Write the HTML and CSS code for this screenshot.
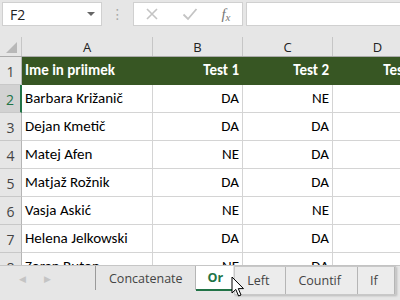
FILE: index.html
```html
<!DOCTYPE html>
<html lang="sl">
<head>
    <meta charset="UTF-8">
    <title>Or</title>
    <link rel="stylesheet" href="styles.css">
</head>
<body>

<div class="toolbar">
    <div class="namebox">
        <span>F2</span>
        <span class="caret"></span>
    </div>
    <div class="dots">⋮</div>
    <div class="fbtns">
        <svg width="14" height="14" viewBox="0 0 14 14"><path d="M2 2 L12 12 M12 2 L2 12" stroke="#c4c4c4" stroke-width="1.6" fill="none"/></svg>
        <svg width="16" height="14" viewBox="0 0 16 14"><path d="M1.5 7.5 L6 12 L14.5 2" stroke="#c4c4c4" stroke-width="1.8" fill="none"/></svg>
        <span class="fx">f<span class="x">x</span></span>
    </div>
    <div class="finput"></div>
</div>

<div class="sheet">
    <div class="colhead">
        <div class="corner"><span class="tri"></span></div>
        <div class="col">A</div>
        <div class="col">B</div>
        <div class="col">C</div>
        <div class="col">D</div>
    </div>

    <div class="row head">
        <div class="num">1</div>
        <div class="cell">Ime in priimek</div>
        <div class="cell r">Test 1</div>
        <div class="cell r">Test 2</div>
        <div class="cell r">Test 3</div>
    </div>
    <div class="row">
        <div class="num active">2</div>
        <div class="cell">Barbara Križanič</div>
        <div class="cell r">DA</div>
        <div class="cell r">NE</div>
        <div class="cell"></div>
    </div>
    <div class="row">
        <div class="num">3</div>
        <div class="cell">Dejan Kmetič</div>
        <div class="cell r">DA</div>
        <div class="cell r">DA</div>
        <div class="cell"></div>
    </div>
    <div class="row">
        <div class="num">4</div>
        <div class="cell">Matej Afen</div>
        <div class="cell r">NE</div>
        <div class="cell r">DA</div>
        <div class="cell"></div>
    </div>
    <div class="row">
        <div class="num">5</div>
        <div class="cell">Matjaž Rožnik</div>
        <div class="cell r">DA</div>
        <div class="cell r">DA</div>
        <div class="cell"></div>
    </div>
    <div class="row">
        <div class="num">6</div>
        <div class="cell">Vasja Askić</div>
        <div class="cell r">NE</div>
        <div class="cell r">NE</div>
        <div class="cell"></div>
    </div>
    <div class="row">
        <div class="num">7</div>
        <div class="cell">Helena Jelkowski</div>
        <div class="cell r">DA</div>
        <div class="cell r">DA</div>
        <div class="cell"></div>
    </div>
    <div class="row">
        <div class="num">8</div>
        <div class="cell">Zoran Buton</div>
        <div class="cell r">NE</div>
        <div class="cell r">DA</div>
        <div class="cell"></div>
    </div>
</div>

<div class="tabbar">
    <div class="nav">
        <span>◀</span>
        <span>▶</span>
    </div>
    <div class="tab">Concatenate</div>
    <div class="tab active">Or</div>
    <div class="dragged">
        <div class="tab">Left</div>
        <div class="tab">Countif</div>
        <div class="tab">If</div>
    </div>
</div>

<svg class="cursor" width="14" height="22" viewBox="0 0 14 22">
    <path d="M1 1 L1 17 L4.8 13.4 L7.6 20 L10 19 L7.3 12.6 L12.5 12.6 Z" fill="#fff" stroke="#000" stroke-width="1"/>
</svg>

</body>
</html>
```

FILE: styles.css
```css
body {
    margin: 0;
    width: 400px;
    height: 300px;
    overflow: hidden;
    background: #e6e6e6;
    font-family: Calibri, Carlito, Lato, sans-serif;
    position: relative;
}

.toolbar {
    display: flex;
    align-items: center;
    height: 24px;
    padding: 2px 0 0 2px;
}
.namebox {
    flex-shrink: 0;
    width: 100px;
    height: 24px;
    background: #fff;
    border: 1px solid #d0d0d0;
    display: flex;
    align-items: center;
    justify-content: space-between;
    padding: 0 6px 0 7px;
    box-sizing: border-box;
    font-family: "Open Sans", sans-serif;
    font-size: 14px;
    color: #222;
}
.caret {
    width: 0;
    height: 0;
    border-left: 4px solid transparent;
    border-right: 4px solid transparent;
    border-top: 4px solid #666;
}
.dots {
    flex-shrink: 0;
    width: 31px;
    text-align: center;
    color: #a8a8a8;
    font-size: 14px;
    font-family: "DejaVu Sans", sans-serif;
}
.fbtns {
    flex-shrink: 0;
    width: 110px;
    height: 24px;
    background: #fff;
    border: 1px solid #d0d0d0;
    box-sizing: border-box;
    display: flex;
    align-items: center;
    justify-content: space-around;
}
.fx {
    font-family: "Liberation Serif", serif;
    font-style: italic;
    color: #777;
    font-size: 15px;
}
.fx .x { font-size: 11px; position: relative; top: 2px; }
.finput {
    flex: 1;
    height: 24px;
    margin-left: 3px;
    background: #fff;
    border: 1px solid #d0d0d0;
    border-right: none;
    box-sizing: border-box;
}

.sheet {
    margin-top: 11px;
    height: 228px;
    overflow: hidden;
}
.colhead, .row {
    display: grid;
    grid-template-columns: 22px 131px 90px 90px 90px;
}
.colhead {
    height: 20px;
    border-bottom: 1px solid #ababab;
    box-sizing: border-box;
    font-family: "Open Sans", sans-serif;
    font-size: 13px;
    color: #222;
}
.corner {
    border-right: 1px solid #c6c6c6;
    position: relative;
}
.tri {
    position: absolute;
    right: 4px;
    bottom: 3px;
    width: 0;
    height: 0;
    border-left: 11px solid transparent;
    border-bottom: 11px solid #b8b8b8;
}
.col {
    display: flex;
    align-items: center;
    justify-content: center;
    border-right: 1px solid #c6c6c6;
}

.row {
    height: 28px;
    font-size: 15px;
    color: #000;
}
.num {
    background: #e6e6e6;
    border-right: 1px solid #b5b5b5;
    border-bottom: 1px solid #c8c8c8;
    display: flex;
    align-items: flex-end;
    justify-content: center;
    padding-bottom: 3px;
    font-family: "Open Sans", sans-serif;
    font-size: 14px;
    color: #444;
}
.num.active {
    background: #d2d2d2;
    color: #217346;
    border-right: 2px solid #217346;
}
.cell {
    background: #fff;
    border-right: 1px solid #d4d4d4;
    border-bottom: 1px solid #d4d4d4;
    display: flex;
    align-items: flex-end;
    padding: 0 3px 5px 3px;
    white-space: nowrap;
    overflow: hidden;
}
.cell.r { justify-content: flex-end; }
.head .cell {
    background: #375623;
    border-color: #375623;
    color: #fff;
    font-weight: bold;
}

.tabbar {
    height: 34px;
    border-top: 1px solid #c6c6c6;
    display: flex;
    align-items: flex-start;
    font-family: "Open Sans", sans-serif;
    font-size: 12.5px;
    color: #444;
}
.nav {
    flex-shrink: 0;
    width: 96px;
    height: 24px;
    display: flex;
    gap: 18px;
    padding-left: 19px;
    align-items: center;
    box-sizing: border-box;
    color: #c4c4c4;
    font-size: 9px;
    border-right: 1px solid #9a9a9a;
}
.tab {
    flex-shrink: 0;
    height: 24px;
    display: flex;
    align-items: center;
    padding: 0 12px 0 13px;
    border-right: 1px solid #b5b5b5;
}
.tab.active {
    background: #fff;
    color: #217346;
    font-weight: bold;
    border-bottom: 2px solid #217346;
    box-sizing: border-box;
    height: 25px;
    padding: 0 10px 0 12px;
    border-right: none;
}
.dragged {
    flex-shrink: 0;
    display: flex;
    margin-left: 1px;
    background: #ececec;
    border: 1px solid #c8c8c8;
    box-shadow: 1px 1px 2px rgba(0, 0, 0, 0.2);
    height: 27px;
}
.dragged .tab { height: 27px; padding: 0 16px 0 12px; }

.cursor {
    position: absolute;
    left: 231px;
    top: 276px;
}
```
